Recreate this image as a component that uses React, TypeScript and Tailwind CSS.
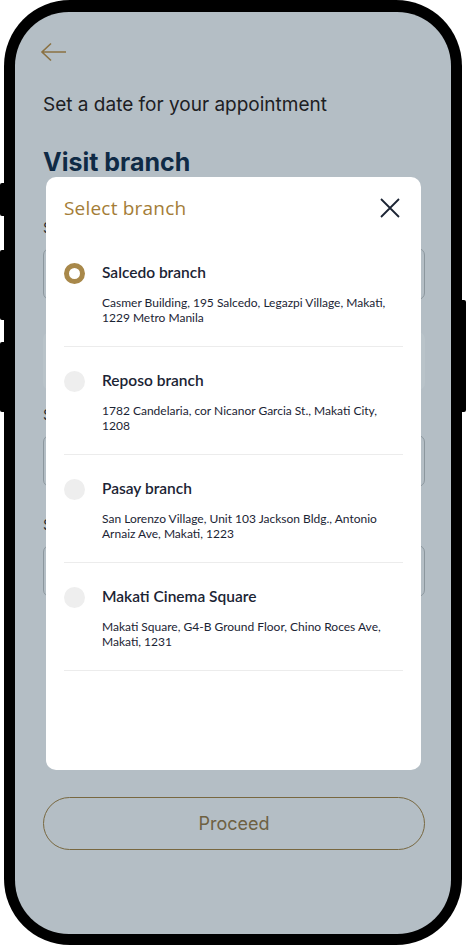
import { useState } from "react";

const branches = [
  {
    name: "Salcedo branch",
    address: "Casmer Building, 195 Salcedo, Legazpi Village, Makati, 1229 Metro Manila",
  },
  {
    name: "Reposo branch",
    address: "1782 Candelaria, cor Nicanor Garcia St., Makati City, 1208",
  },
  {
    name: "Pasay branch",
    address: "San Lorenzo Village, Unit 103 Jackson Bldg., Antonio Arnaiz Ave, Makati, 1223",
  },
  {
    name: "Makati Cinema Square",
    address: "Makati Square, G4-B Ground Floor, Chino Roces Ave, Makati, 1231",
  },
];

const Field = ({ label }: { label: string }) => (
  <div>
    <div className="text-[15px] leading-[20px] text-[#2a2f33]">{label}</div>
    <div className="mt-[10px] h-[52px] rounded-[7px] border border-[#8c979e]" />
  </div>
);

export default function App() {
  const [selected, setSelected] = useState(0);

  return (
    <div className="relative w-[466px] h-[945px] bg-white overflow-hidden font-['Inter',sans-serif]">
      {/* side buttons */}
      <div className="absolute left-0 top-[183px] w-[6px] h-[33px] bg-black rounded-l-[2px]" />
      <div className="absolute left-0 top-[250px] w-[6px] h-[70px] bg-black rounded-l-[2px]" />
      <div className="absolute left-0 top-[342px] w-[6px] h-[70px] bg-black rounded-l-[2px]" />
      <div className="absolute right-0 top-[300px] w-[6px] h-[112px] bg-black rounded-r-[2px]" />

      <div className="ml-[4px] w-[458px] h-[945px] bg-black rounded-[66px] p-[11px] pt-[12px]">
        <div className="relative h-full rounded-[54px] bg-[#b4bec5] overflow-hidden">
          {/* page under the sheet */}
          <div className="pl-[28px] pr-[26px] pt-[30px] flex flex-col h-full">
            <svg width="28" height="20" viewBox="0 0 28 20" className="-ml-[3px]">
              <path d="M26 10H2M11 1.5L2 10l9 8.5" fill="none" stroke="#8a7142" strokeWidth="1.6" />
            </svg>
            <div className="mt-[30px] text-[19px] leading-[26px] text-[#1d2023]">
              Set a date for your appointment
            </div>
            <div className="mt-[29px] text-[25px] leading-[30px] font-bold text-[#0f2a45]">
              Visit branch
            </div>
            <div className="mt-[41px] flex flex-col">
              <Field label="Select branch" />
              <div className="mt-[32px] h-[58px] rounded-[7px] bg-[#b9c3c9]" />
              <div className="mt-[15px]">
                <Field label="Select date" />
              </div>
              <div className="mt-[28px]">
                <Field label="Select time" />
              </div>
            </div>
            <button className="mt-[200px] h-[53px] rounded-full border border-[#786840] text-[18px] text-[#6e6142]">
              Proceed
            </button>
          </div>

          {/* branch sheet */}
          <div className="absolute left-[31px] top-[165px] w-[375px] h-[593px] rounded-[10px] bg-white px-[18px] pt-[19px] font-['Lato',sans-serif]">
            <div className="flex items-center justify-between">
              <div className="text-[19px] leading-[24px] text-[#a47d37] font-['Open_Sans',sans-serif] tracking-[0.2px]">
                Select branch
              </div>
              <svg width="22" height="22" viewBox="0 0 22 22" className="mr-[2px]">
                <path d="M2 2l18 18M20 2L2 20" stroke="#1b2434" strokeWidth="1.8" />
              </svg>
            </div>
            <div className="mt-[19px]">
              {branches.map((b, i) => (
                <div
                  key={b.name}
                  onClick={() => setSelected(i)}
                  className="pt-[23px] pb-[21px] border-b border-[#ececec] cursor-pointer"
                >
                  <div className="flex items-center h-[22px]">
                    {selected === i ? (
                      <div className="w-[21px] h-[21px] rounded-full border-[5px] border-[#a8884a]" />
                    ) : (
                      <div className="w-[21px] h-[21px] rounded-full bg-[#eeeeee]" />
                    )}
                    <div className="ml-[17px] text-[15.5px] font-semibold text-[#1b2434]">{b.name}</div>
                  </div>
                  <div className="mt-[11px] pl-[38px] pr-[10px] text-[12px] leading-[15px] text-[#1b2434]">
                    {b.address}
                  </div>
                </div>
              ))}
            </div>
          </div>
        </div>
      </div>
    </div>
  );
}
